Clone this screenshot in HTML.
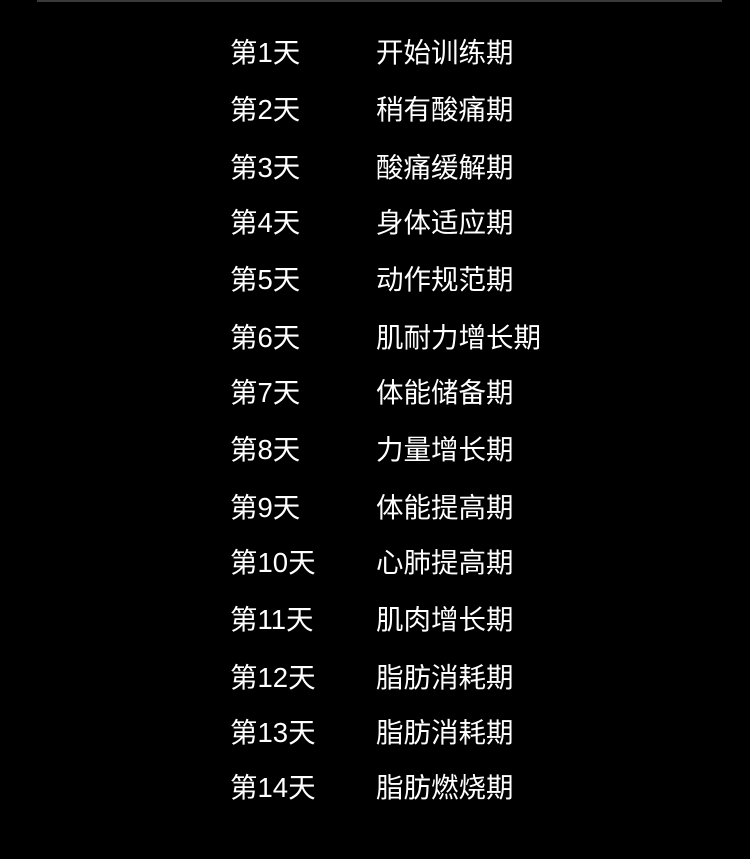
<!DOCTYPE html>
<html><head><meta charset="utf-8"><style>
html,body{margin:0;padding:0;background:#000;width:750px;height:859px;overflow:hidden;position:relative}
.line{position:absolute;left:37px;top:0;width:685px;height:2px;background:#3a3a3a}
.r{position:absolute;left:0;width:750px;height:34px;line-height:34px;font-family:"Liberation Sans","Noto Sans CJK SC",sans-serif;font-size:27.5px;color:#fff}
.a{position:absolute;left:230px}
.b{position:absolute;left:376px}
</style></head><body>
<div class="line"></div>
<div class="r" style="top:36px"><span class="a">第1天</span><span class="b">开始训练期</span></div>
<div class="r" style="top:93px"><span class="a">第2天</span><span class="b">稍有酸痛期</span></div>
<div class="r" style="top:151px"><span class="a">第3天</span><span class="b">酸痛缓解期</span></div>
<div class="r" style="top:206px"><span class="a">第4天</span><span class="b">身体适应期</span></div>
<div class="r" style="top:263px"><span class="a">第5天</span><span class="b">动作规范期</span></div>
<div class="r" style="top:321px"><span class="a">第6天</span><span class="b">肌耐力增长期</span></div>
<div class="r" style="top:376px"><span class="a">第7天</span><span class="b">体能储备期</span></div>
<div class="r" style="top:433px"><span class="a">第8天</span><span class="b">力量增长期</span></div>
<div class="r" style="top:491px"><span class="a">第9天</span><span class="b">体能提高期</span></div>
<div class="r" style="top:546px"><span class="a">第10天</span><span class="b">心肺提高期</span></div>
<div class="r" style="top:603px"><span class="a">第11天</span><span class="b">肌肉增长期</span></div>
<div class="r" style="top:661px"><span class="a">第12天</span><span class="b">脂肪消耗期</span></div>
<div class="r" style="top:716px"><span class="a">第13天</span><span class="b">脂肪消耗期</span></div>
<div class="r" style="top:771px"><span class="a">第14天</span><span class="b">脂肪燃烧期</span></div>
</body></html>
